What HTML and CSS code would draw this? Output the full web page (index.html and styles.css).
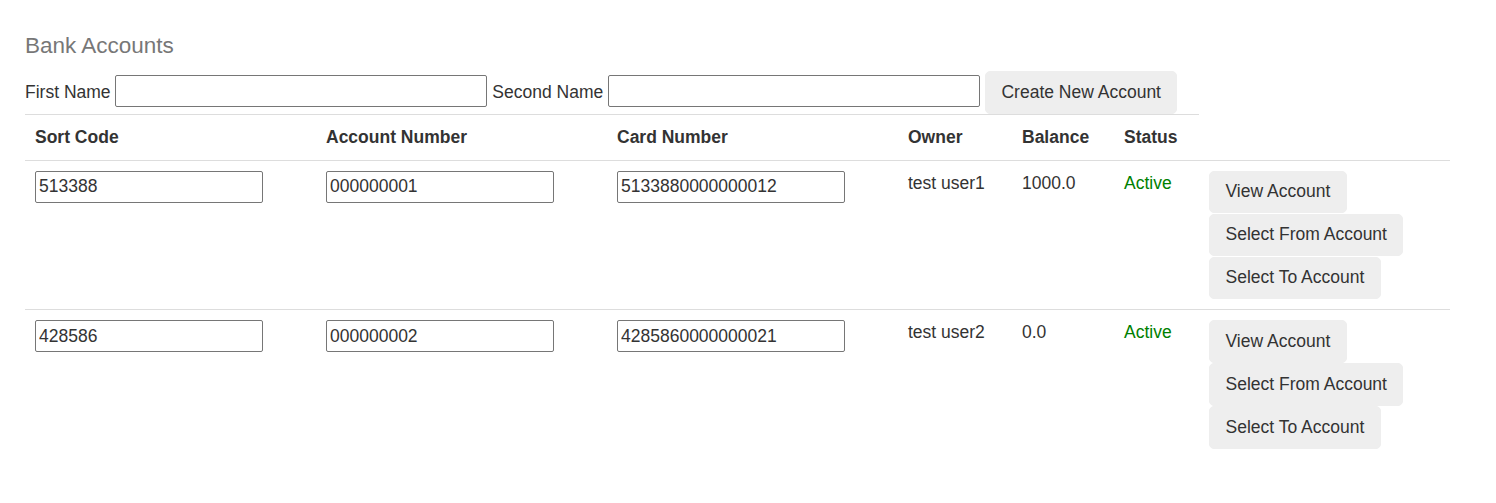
FILE: index.html
```html
<!DOCTYPE html>
<html>
<head>
<meta charset="utf-8">
<link rel="stylesheet" href="styles.css">
</head>
<body>
<div class="page">
  <h4 class="title">Bank Accounts</h4>
  <div class="new-account">
    <label>First Name <input class="name-input" type="text"></label>
    <label>Second Name <input class="name-input" type="text"></label>
    <button class="btn">Create New Account</button>
  </div>
  <table class="accounts">
    <colgroup>
      <col class="c-wide"><col class="c-wide"><col class="c-wide">
      <col class="c-owner"><col class="c-balance"><col class="c-status"><col>
    </colgroup>
    <thead>
      <tr>
        <th>Sort Code</th>
        <th>Account Number</th>
        <th>Card Number</th>
        <th>Owner</th>
        <th>Balance</th>
        <th>Status</th>
        <th></th>
      </tr>
    </thead>
    <tbody>
      <tr>
        <td><input class="cell-input" type="text" value="513388"></td>
        <td><input class="cell-input" type="text" value="000000001"></td>
        <td><input class="cell-input" type="text" value="5133880000000012"></td>
        <td>test user1</td>
        <td>1000.0</td>
        <td class="active">Active</td>
        <td>
          <div class="actions">
            <button class="btn">View Account</button>
            <button class="btn">Select From Account</button>
            <button class="btn">Select To Account</button>
          </div>
        </td>
      </tr>
      <tr>
        <td><input class="cell-input" type="text" value="428586"></td>
        <td><input class="cell-input" type="text" value="000000002"></td>
        <td><input class="cell-input" type="text" value="4285860000000021"></td>
        <td>test user2</td>
        <td>0.0</td>
        <td class="active">Active</td>
        <td>
          <div class="actions">
            <button class="btn">View Account</button>
            <button class="btn">Select From Account</button>
            <button class="btn">Select To Account</button>
          </div>
        </td>
      </tr>
    </tbody>
  </table>
</div>
</body>
</html>
```
FILE: styles.css
```css
html, body {
  margin: 0;
  padding: 0;
  background: #fff;
}
body {
  font-family: "Liberation Sans", Arial, Helvetica, sans-serif;
  font-size: 17.5px;
  line-height: 25px;
  color: #333;
}
.page {
  padding: 21.5px 0 0 25px;
}
.title {
  margin: 12.5px 0 10.5px;
  font-size: 22.5px;
  font-weight: normal;
  line-height: 24.75px;
  color: #777;
}
.new-account {
  width: 1174px;
  padding-top: 1.75px;
  border-bottom: 1px solid #ddd;
}
label {
  font-weight: normal;
}
input {
  font: inherit;
  color: #333;
  box-sizing: border-box;
  height: 32px;
  border: 1px solid #767676;
  border-radius: 2px;
  padding: 0 3px;
  margin: 0;
  background: #fff;
}
.name-input {
  width: 372px;
  vertical-align: 1px;
}
.cell-input {
  display: block;
  width: 228px;
}
.btn {
  font: inherit;
  color: #333;
  line-height: 25px;
  padding: 7.75px 15.5px;
  background: #eee;
  border: 1px solid #eee;
  border-radius: 5px;
  margin: 0;
  cursor: pointer;
}
.accounts {
  width: 1425px;
  border-collapse: collapse;
  border-spacing: 0;
  table-layout: fixed;
}
.c-wide { width: 291px; }
.c-owner { width: 114px; }
.c-balance { width: 102px; }
.c-status { width: 85px; }
.accounts th {
  text-align: left;
  font-weight: bold;
  padding: 10px;
  border-bottom: 1px solid #ddd;
  vertical-align: bottom;
}
.accounts td {
  padding: 10px;
  vertical-align: top;
}
.accounts tbody tr + tr td {
  border-top: 1px solid #ddd;
}
.active {
  color: #008000;
}
.actions {
  display: flex;
  flex-direction: column;
  align-items: flex-start;
  gap: 0.5px;
}
```
